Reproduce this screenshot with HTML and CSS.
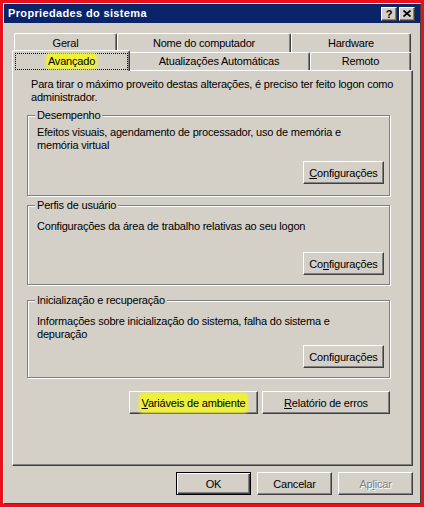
FILE: index.html
```html
<!DOCTYPE html>
<html lang="pt">
<head>
<meta charset="utf-8">
<title>Propriedades do sistema</title>
<link rel="stylesheet" href="styles.css">
</head>
<body>
<div class="frame">
  <div class="window">
    <div class="titlebar">
      <span class="title">Propriedades do sistema</span>
      <div class="tbtns">
        <span class="tbtn tbtn-help">?</span>
        <span class="tbtn"><svg class="xicon" width="8" height="7" viewBox="0 0 8 7"><path d="M0.5 0.5 L7.5 6.5 M7.5 0.5 L0.5 6.5" stroke="#000" stroke-width="1.7" fill="none"/></svg></span>
      </div>
    </div>
    <div class="content">
      <div class="tabs">
        <div class="tab-row back">
          <div class="tab tab-geral">Geral</div>
          <div class="tab tab-nome">Nome do computador</div>
          <div class="tab tab-hw">Hardware</div>
        </div>
        <div class="tab-row front">
          <div class="tab tab-av selected"><span class="focus"><span class="hl hl-tab">Avançado</span></span></div>
          <div class="tab tab-at">Atualizações Automáticas</div>
          <div class="tab tab-rem">Remoto</div>
        </div>
      </div>
      <div class="panel">
        <p class="intro">Para tirar o máximo proveito destas alterações, é preciso ter feito logon como<br>administrador.</p>

        <div class="group group-perf">
          <span class="group-label">Desempenho</span>
          <p class="group-text">Efeitos visuais, agendamento de processador, uso de memória e<br>memória virtual</p>
          <button class="btn btn-config" type="button"><u>C</u>onfigurações</button>
        </div>

        <div class="group group-prof">
          <span class="group-label">Perfis de usuário</span>
          <p class="group-text">Configurações da área de trabalho relativas ao seu logon</p>
          <button class="btn btn-config" type="button">Co<u>n</u>figurações</button>
        </div>

        <div class="group group-init">
          <span class="group-label">Inicialização e recuperação</span>
          <p class="group-text">Informações sobre inicialização do sistema, falha do sistema e<br>depuração</p>
          <button class="btn btn-config" type="button">Confi<u>g</u>urações</button>
        </div>

        <div class="actions">
          <button class="btn btn-env" type="button"><span class="hl hl-btn"><u>V</u>ariáveis de ambiente</span></button>
          <button class="btn btn-err" type="button"><u>R</u>elatório de erros</button>
        </div>
      </div>
      <div class="footer">
        <button class="btn btn-dlg btn-default" type="button">OK</button>
        <button class="btn btn-dlg" type="button">Cancelar</button>
        <button class="btn btn-dlg btn-disabled" type="button">Ap<u>l</u>icar</button>
      </div>
    </div>
  </div>
</div>
</body>
</html>
```

FILE: styles.css
```css
html, body {
  margin: 0;
  padding: 0;
  background: #d4d0c8;
}

.frame {
  width: 424px;
  height: 507px;
  box-sizing: border-box;
  border: 3px solid #e8101c;
  display: flex;
}

.window {
  flex: 1;
  min-width: 0;
  overflow: hidden;
  display: flex;
  flex-direction: column;
  background: #d4d0c8;
  border: 1px solid;
  border-color: #ffffff #404040 #404040 #ffffff;
  font-family: "Liberation Sans", Arial, sans-serif;
  font-size: 11px;
  letter-spacing: -0.2px;
  color: #000;
}

/* ---------- title bar ---------- */
.titlebar {
  height: 19px;
  flex: none;
  display: flex;
  align-items: center;
  background: #0a246a;
  color: #fff;
  padding: 0 5px 0 4px;
}

.title {
  flex: 1;
  font-weight: bold;
  letter-spacing: 0.35px;
  line-height: 13px;
}

.tbtns {
  display: flex;
  gap: 2px;
}

.tbtn {
  width: 16px;
  height: 14px;
  box-sizing: border-box;
  display: flex;
  align-items: center;
  justify-content: center;
  background: #d4d0c8;
  border: 1px solid;
  border-color: #ffffff #404040 #404040 #ffffff;
  box-shadow: inset -1px -1px #808080;
  color: #000;
}

.tbtn-help {
  font-weight: bold;
  font-size: 11px;
  line-height: 11px;
  letter-spacing: 0;
  padding-top: 1px;
}

.xicon {
  display: block;
}

/* ---------- body ---------- */
.content {
  flex: 1;
  min-width: 0;
  display: flex;
  flex-direction: column;
  padding: 10px 7px 0 8px;
}

.tabs {
  display: flex;
  flex-direction: column;
}

.tab-row {
  display: flex;
  align-items: flex-start;
  padding-left: 2px;
}

.tab-row.back {
  height: 19px;
}

.tab-row.front {
  height: 18px;
}

.tab {
  box-sizing: border-box;
  flex: none;
  background: #d4d0c8;
  border-left: 1px solid #ffffff;
  border-top: 1px solid #ffffff;
  border-right: 1px solid #404040;
  box-shadow: inset -1px 0 #808080;
  border-top-left-radius: 2px;
  border-top-right-radius: 2px;
  text-align: center;
  white-space: nowrap;
  line-height: 17px;
}

.back .tab {
  height: 19px;
  padding-top: 1px;
}

.front .tab {
  height: 18px;
}

.tab-geral { width: 103px; }
.tab-nome { width: 174px; }
.tab-hw { width: 120px; }
.tab-av { width: 114px; }
.tab-at { width: 182px; }
.tab-rem { width: 101px; }

.tab.selected {
  position: relative;
  z-index: 1;
  width: 118px;
  height: 21px;
  margin: -2px -2px -1px -2px;
}

.focus {
  display: block;
  box-sizing: border-box;
  height: 17px;
  margin: 2px 1px 0 2px;
  border: 1px dotted #000;
  line-height: 14px;
}

.hl {
  background: #eef03c;
  border-radius: 3px;
}

.hl-tab {
  padding: 1px 1px;
  box-shadow: 0 0 3px 1px #eef03c;
}

.hl-btn {
  padding: 3px 2px;
  box-shadow: 0 0 3px 1px #eef03c;
}

.panel {
  height: 396px;
  flex: none;
  min-width: 0;
  box-sizing: border-box;
  border: 1px solid;
  border-color: #ffffff #404040 #404040 #ffffff;
  box-shadow: inset -1px -1px #808080;
  padding: 7px 22px 0 14px;
}

.intro {
  margin: 0 0 0 4px;
  line-height: 13px;
  white-space: nowrap;
}

/* ---------- group boxes ---------- */
.group {
  position: relative;
  box-sizing: border-box;
  display: flex;
  flex-direction: column;
  border: 1px solid #808080;
  box-shadow: inset 1px 1px #ffffff, 1px 1px #ffffff;
  padding: 0 5px 9px 9px;
}

.group-label {
  position: absolute;
  top: -7px;
  left: 7px;
  padding: 0 2px;
  background: #d4d0c8;
  line-height: 13px;
  white-space: nowrap;
}

.group-text {
  margin: 0;
  line-height: 13px;
  white-space: nowrap;
}

.group-perf {
  margin-top: 11px;
  height: 81px;
  padding-top: 10px;
  padding-bottom: 11px;
}

.group-prof {
  margin-top: 9px;
  height: 80px;
  padding-top: 14px;
}

.group-init {
  margin-top: 15px;
  height: 78px;
  padding-top: 14px;
}

/* ---------- buttons ---------- */
.btn {
  box-sizing: border-box;
  height: 23px;
  padding: 0;
  margin: 0;
  background: #d4d0c8;
  border: 1px solid;
  border-color: #ffffff #404040 #404040 #ffffff;
  box-shadow: inset -1px -1px #808080;
  font-family: "Liberation Sans", Arial, sans-serif;
  font-size: 11px;
  letter-spacing: -0.2px;
  color: #000;
  text-align: center;
  white-space: nowrap;
  border-radius: 0;
}

.btn-config {
  width: 81px;
  margin-top: auto;
  align-self: flex-end;
}

.actions {
  display: flex;
  justify-content: flex-end;
  gap: 4px;
  margin-top: 13px;
}

.btn-env { width: 129px; }
.btn-err { width: 128px; }

.footer {
  display: flex;
  justify-content: flex-end;
  gap: 6px;
  margin-top: 6px;
}

.btn-dlg {
  width: 75px;
}

.btn-default {
  border: 1px solid #000;
  box-shadow: inset 1px 1px #ffffff, inset -1px -1px #404040, inset -2px -2px #808080;
}

.btn-disabled {
  color: #808080;
  text-shadow: 1px 1px #ffffff;
}
```
